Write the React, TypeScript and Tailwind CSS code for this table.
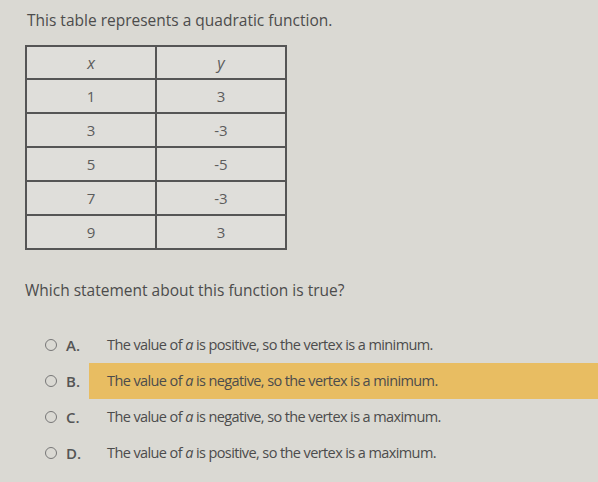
import React from "react";

const rows = [
  { x: "1", y: "3" },
  { x: "3", y: "-3" },
  { x: "5", y: "-5" },
  { x: "7", y: "-3" },
  { x: "9", y: "3" },
];

const options = [
  { letter: "A.", pre: "The value of ", post: " is positive, so the vertex is a minimum.", picked: false },
  { letter: "B.", pre: "The value of ", post: " is negative, so the vertex is a minimum.", picked: true },
  { letter: "C.", pre: "The value of ", post: " is negative, so the vertex is a maximum.", picked: false },
  { letter: "D.", pre: "The value of ", post: " is positive, so the vertex is a maximum.", picked: false },
];

export default function App() {
  return (
    <div className="w-[598px] h-[482px] overflow-hidden bg-[#dad9d3] text-[#4c4c4c] font-['Open_Sans',sans-serif]">
      <div className="flex flex-col pl-[25px]">
        <p className="mt-[10px] pl-[2px] text-[15.5px] leading-[20px]">This table represents a quadratic function.</p>

        {/* Table */}
        <table className="mt-[15px] w-[262px] border-collapse border-2 border-[#555] text-[15px] text-[#5c5c5c] bg-[#dfdeda]">
          <tbody>
            <tr className="h-[33px]">
              <td className="w-[130px] border-2 border-[#555] text-center italic text-[16px]">x</td>
              <td className="border-2 border-[#555] text-center italic text-[16px]">y</td>
            </tr>
            {rows.map((r) => (
              <tr key={r.x} className="h-[34px]">
                <td className="border-2 border-[#555] text-center">{r.x}</td>
                <td className="border-2 border-[#555] text-center">{r.y}</td>
              </tr>
            ))}
          </tbody>
        </table>

        <p className="mt-[30px] text-[15.5px] leading-[20px]">Which statement about this function is true?</p>

        {/* Options */}
        <div className="mt-[27px] flex flex-col">
          {options.map((o) => (
            <div key={o.letter} className="h-[36px] flex items-center">
              <div className="w-[64px] flex items-center pl-[20px] gap-[9px]">
                <span className="w-[12px] h-[12px] rounded-full border-[1.5px] border-[#777] shrink-0" />
                <span className="text-[15px] font-semibold text-[#555]">{o.letter}</span>
              </div>
              <div
                className={
                  o.picked
                    ? "flex-1 h-[36px] flex items-center pl-[18px] bg-[#e8bd62]"
                    : "flex-1 h-[36px] flex items-center pl-[18px]"
                }
              >
                <span className="text-[14.5px] tracking-[-0.6px]">
                  {o.pre}
                  <i>a</i>
                  {o.post}
                </span>
              </div>
            </div>
          ))}
        </div>
      </div>
    </div>
  );
}
